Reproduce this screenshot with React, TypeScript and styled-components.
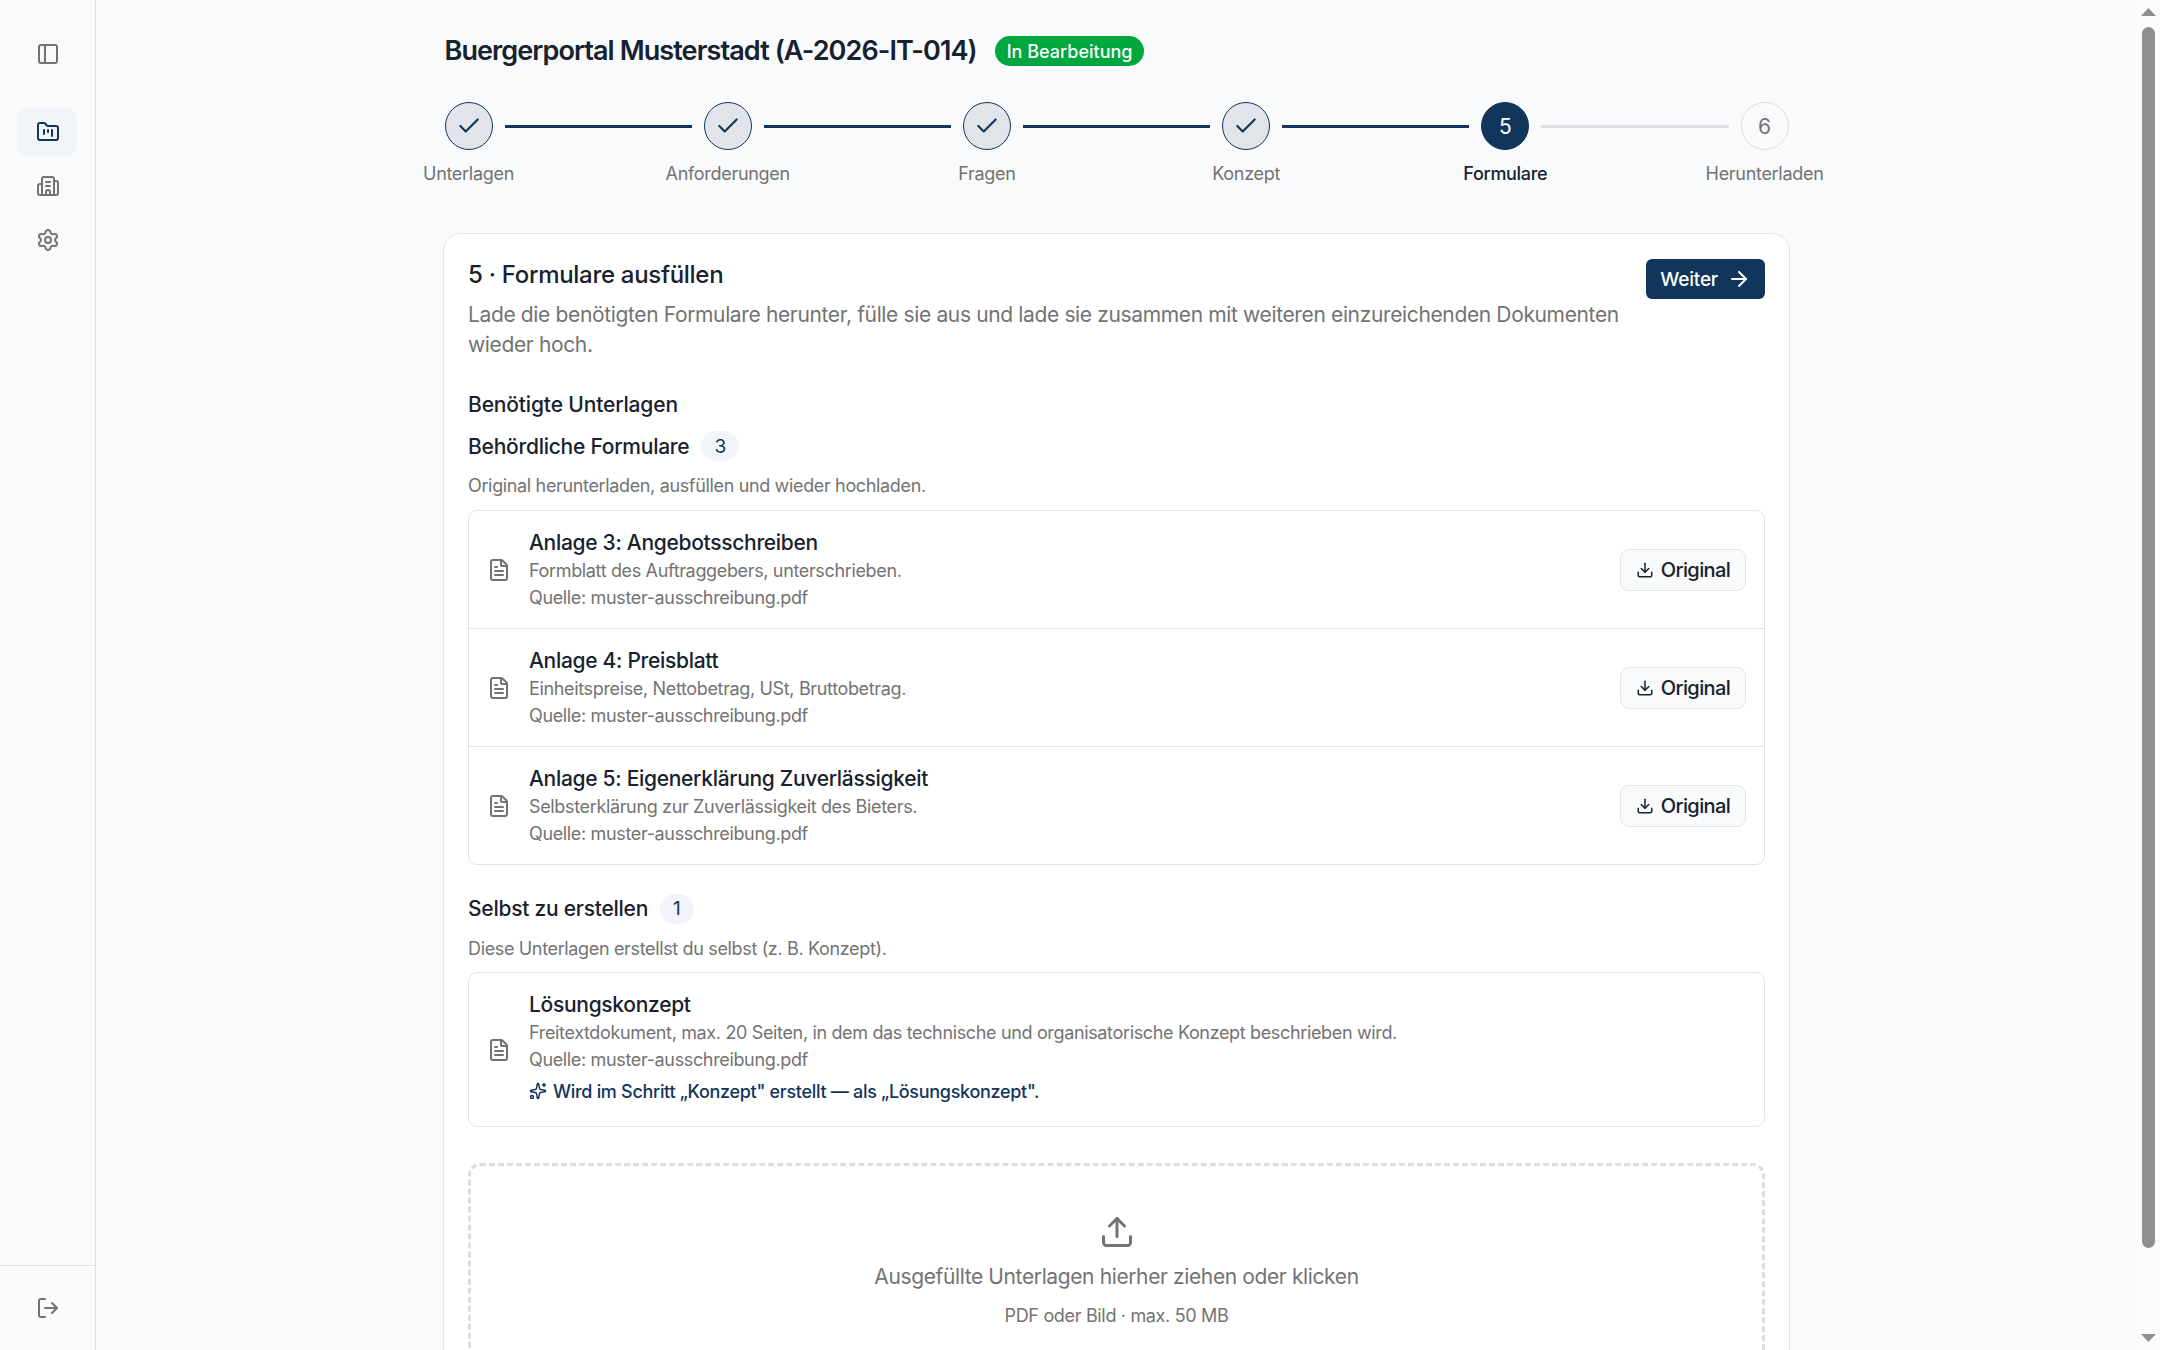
import { Fragment } from 'react';
import styled, { createGlobalStyle } from 'styled-components';
import {
  ArrowRight,
  Building2,
  Check,
  Download,
  FileText,
  FolderKanban,
  LogOut,
  PanelLeft,
  Settings,
  Sparkles,
  Upload,
} from 'lucide-react';

const navy = '#12355b';
const ink = '#18212e';
const muted = '#737373';
const line = '#e2e4e9';
const thumb = '#8f8f8f';

const GlobalStyle = createGlobalStyle`
  * {
    box-sizing: border-box;
  }

  html,
  body {
    margin: 0;
    height: 100%;
    overflow: hidden;
  }

  body {
    font-family: Inter, 'Liberation Sans', sans-serif;
    color: ${ink};
    background-color: #f9fafc;
  }
`;

const Shell = styled.div`
  display: flex;
  height: 100vh;
`;

const Sidebar = styled.aside`
  display: flex;
  flex-direction: column;
  flex: none;
  width: 96px;
  background-color: #fafafa;
  border-right: 1px solid #dedfe2;
`;

const SideTop = styled.div`
  display: flex;
  justify-content: center;
  padding-top: 42px;
  height: 108px;
`;

const SideNav = styled.nav`
  display: flex;
  flex-direction: column;
  gap: 6px;
  flex: 1;
  padding-left: 18px;
`;

const SideItem = styled.div<{ $active?: boolean }>`
  display: flex;
  align-items: center;
  justify-content: center;
  width: 59px;
  height: 48px;
  border-radius: 9px;
  color: ${(p) => (p.$active ? navy : muted)};
  background-color: ${(p) => (p.$active ? '#f1f5f9' : 'transparent')};
`;

const SideBottom = styled.div`
  display: flex;
  justify-content: center;
  align-items: center;
  height: 85px;
  border-top: 1px solid #dedfe2;
  color: ${muted};
`;

const IconMuted = styled.span`
  display: flex;
  color: ${muted};
`;

const Main = styled.main`
  flex: 1;
  min-width: 0;
  overflow: hidden;
  background-color: #f9fafc;
`;

const ScrollRail = styled.div`
  display: flex;
  flex-direction: column;
  align-items: center;
  flex: none;
  width: 23px;
  padding: 8px 0;
  background-color: #fbfbfb;
  color: ${thumb};
`;

const ScrollThumb = styled.div`
  flex: none;
  width: 13px;
  height: 1221px;
  margin-top: 11px;
  border-radius: 7px;
  background-color: ${thumb};
`;

const ScrollEnd = styled.svg`
  display: block;
  flex: none;
  margin-top: auto;

  &:first-child {
    margin-top: 0;
  }
`;

const Content = styled.div`
  width: 1344px;
  margin: 0 auto;
  padding: 30px 0 37px;
`;

const TitleRow = styled.div`
  display: flex;
  align-items: center;
  gap: 18px;
  height: 42px;
`;

const Title = styled.h1`
  margin: 0;
  font-size: 27px;
  line-height: 42px;
  font-weight: 600;
  letter-spacing: -0.9px;
`;

const StatusBadge = styled.span`
  display: flex;
  align-items: center;
  height: 30px;
  padding: 0 12px;
  border-radius: 15px;
  background-color: #00a63e;
  color: #fff;
  font-size: 18px;
  font-weight: 500;
`;

const Stepper = styled.div`
  display: flex;
  margin-top: 30px;
`;

const Step = styled.div`
  display: flex;
  flex-direction: column;
  align-items: center;
  flex: none;
  width: 48px;
  gap: 10px;
`;

const Circle = styled.div<{ $state: 'done' | 'active' | 'todo' }>`
  display: flex;
  align-items: center;
  justify-content: center;
  flex: none;
  width: 48px;
  height: 48px;
  border-radius: 50%;
  font-size: 21px;
  border: 1px solid ${(p) => (p.$state === 'todo' ? '#dcdde1' : navy)};
  color: ${(p) => (p.$state === 'active' ? '#fff' : p.$state === 'done' ? navy : muted)};
  background-color: ${(p) =>
    p.$state === 'active' ? navy : p.$state === 'done' ? '#e1e5ea' : 'transparent'};
`;

const StepLabel = styled.span<{ $active?: boolean }>`
  font-size: 18px;
  line-height: 27px;
  letter-spacing: -0.3px;
  white-space: nowrap;
  font-weight: ${(p) => (p.$active ? 500 : 400)};
  color: ${(p) => (p.$active ? ink : muted)};
`;

const StepLine = styled.div<{ $done?: boolean }>`
  flex: 1;
  height: 3px;
  margin: 22.5px 12px 0;
  background-color: ${(p) => (p.$done ? navy : '#dedfe4')};
`;

const Card = styled.section`
  margin: 46px -1.5px 0;
  padding: 24px;
  background-color: #fff;
  border: 1px solid ${line};
  border-radius: 18px;
`;

const CardHeader = styled.div`
  display: flex;
  align-items: flex-start;
  justify-content: space-between;
  gap: 16px;
`;

const HeaderText = styled.div`
  flex: 1;
`;

const CardTitle = styled.h2`
  margin: -1px 0 7px;
  font-size: 24px;
  line-height: 36px;
  font-weight: 500;
  letter-spacing: -0.3px;
`;

const CardIntro = styled.p`
  margin: 0;
  font-size: 21px;
  line-height: 30px;
  letter-spacing: -0.36px;
  color: ${muted};
`;

const NextButton = styled.button`
  display: flex;
  align-items: center;
  gap: 9px;
  flex: none;
  height: 40px;
  margin-top: 1px;
  padding: 0 14px;
  border: none;
  border-radius: 6px;
  background-color: ${navy};
  color: #fff;
  font: 500 19px Inter, sans-serif;
  letter-spacing: -0.2px;
`;

const SectionTitle = styled.h3`
  margin: 30px 0 11px;
  font-size: 21px;
  line-height: 30px;
  font-weight: 500;
  letter-spacing: -0.15px;
`;

const GroupHead = styled.div<{ $spaced?: boolean }>`
  display: flex;
  align-items: center;
  gap: 12px;
  height: 30px;
  margin-top: ${(p) => (p.$spaced ? '29px' : '0')};
  font-size: 21px;
  font-weight: 500;
  letter-spacing: -0.25px;
`;

const CountBadge = styled.span`
  display: flex;
  align-items: center;
  justify-content: center;
  min-width: 30px;
  height: 30px;
  padding: 0 13px;
  border-radius: 15px;
  background-color: #f1f5f9;
  color: ${navy};
  font-size: 19px;
  font-weight: 400;
  letter-spacing: 0;
`;

const GroupHint = styled.p`
  margin: 11px 0 10.5px;
  font-size: 18px;
  line-height: 27px;
  letter-spacing: -0.35px;
  color: ${muted};
`;

const DocList = styled.div`
  border: 1px solid ${line};
  border-radius: 9px;
`;

const DocRow = styled.div`
  display: flex;
  align-items: center;
  gap: 18px;
  padding: 18px 18px 17px;

  & + & {
    border-top: 1px solid ${line};
  }
`;

const DocText = styled.div`
  flex: 1;
`;

const DocName = styled.div`
  margin-bottom: 1px;
  font-size: 21px;
  line-height: 27px;
  font-weight: 500;
  letter-spacing: -0.3px;
`;

const DocLine = styled.div`
  font-size: 18px;
  line-height: 27px;
  letter-spacing: -0.35px;
  color: ${muted};
`;

const DocNote = styled.div`
  display: flex;
  align-items: center;
  gap: 6px;
  margin: 4.5px 0 4px;
  font-size: 18px;
  line-height: 27px;
  font-weight: 500;
  letter-spacing: -0.3px;
  color: ${navy};
`;

const OriginalButton = styled.button`
  display: flex;
  align-items: center;
  justify-content: center;
  gap: 7px;
  flex: none;
  width: 126px;
  height: 42px;
  border: 1px solid ${line};
  border-radius: 9px;
  background-color: #f9fafb;
  color: ${ink};
  font: 500 20px Inter, sans-serif;
  letter-spacing: -0.6px;
`;

const DropZone = styled.div`
  display: flex;
  flex-direction: column;
  align-items: center;
  margin-top: 36px;
  padding: 48px;
  border: 3px dashed #dcdde1;
  border-radius: 12px;
  color: ${muted};
`;

const DropTitle = styled.div`
  margin-top: 12px;
  font-size: 21px;
  line-height: 30px;
  letter-spacing: -0.38px;
`;

const DropHint = styled.div`
  margin-top: 10px;
  font-size: 18px;
  line-height: 27px;
  letter-spacing: -0.33px;
`;

type Doc = { name: string; desc: string };

const forms: Doc[] = [
  { name: 'Anlage 3: Angebotsschreiben', desc: 'Formblatt des Auftraggebers, unterschrieben.' },
  { name: 'Anlage 4: Preisblatt', desc: 'Einheitspreise, Nettobetrag, USt, Bruttobetrag.' },
  {
    name: 'Anlage 5: Eigenerklärung Zuverlässigkeit',
    desc: 'Selbsterklärung zur Zuverlässigkeit des Bieters.',
  },
];

const steps = ['Unterlagen', 'Anforderungen', 'Fragen', 'Konzept', 'Formulare', 'Herunterladen'];
const activeStep = 4;

export default function App() {
  return (
    <Shell>
      <GlobalStyle />
      <Sidebar>
        <SideTop>
          <IconMuted>
            <PanelLeft size={24} />
          </IconMuted>
        </SideTop>
        <SideNav>
          <SideItem $active>
            <FolderKanban size={24} />
          </SideItem>
          <SideItem>
            <Building2 size={24} />
          </SideItem>
          <SideItem>
            <Settings size={24} />
          </SideItem>
        </SideNav>
        <SideBottom>
          <LogOut size={24} />
        </SideBottom>
      </Sidebar>
      <Main>
        <Content>
          <TitleRow>
            <Title>Buergerportal Musterstadt (A-2026-IT-014)</Title>
            <StatusBadge>In Bearbeitung</StatusBadge>
          </TitleRow>
          <Stepper>
            {steps.map((label, i) => {
              const state = i < activeStep ? 'done' : i === activeStep ? 'active' : 'todo';
              return (
                <Fragment key={label}>
                  <Step>
                    <Circle $state={state}>
                      {state === 'done' ? <Check size={26} /> : i + 1}
                    </Circle>
                    <StepLabel $active={i === activeStep}>{label}</StepLabel>
                  </Step>
                  {i < steps.length - 1 && <StepLine $done={i < activeStep} />}
                </Fragment>
              );
            })}
          </Stepper>
          <Card>
            <CardHeader>
              <HeaderText>
                <CardTitle>5 · Formulare ausfüllen</CardTitle>
                <CardIntro>
                  Lade die benötigten Formulare herunter, fülle sie aus und lade sie zusammen mit
                  weiteren einzureichenden Dokumenten wieder hoch.
                </CardIntro>
              </HeaderText>
              <NextButton>
                Weiter <ArrowRight size={24} />
              </NextButton>
            </CardHeader>
            <SectionTitle>Benötigte Unterlagen</SectionTitle>
            <GroupHead>
              Behördliche Formulare <CountBadge>3</CountBadge>
            </GroupHead>
            <GroupHint>Original herunterladen, ausfüllen und wieder hochladen.</GroupHint>
            <DocList>
              {forms.map((doc) => (
                <DocRow key={doc.name}>
                  <IconMuted>
                    <FileText size={24} />
                  </IconMuted>
                  <DocText>
                    <DocName>{doc.name}</DocName>
                    <DocLine>{doc.desc}</DocLine>
                    <DocLine>Quelle: muster-ausschreibung.pdf</DocLine>
                  </DocText>
                  <OriginalButton>
                    <Download size={18} /> Original
                  </OriginalButton>
                </DocRow>
              ))}
            </DocList>
            <GroupHead $spaced>
              Selbst zu erstellen <CountBadge>1</CountBadge>
            </GroupHead>
            <GroupHint>Diese Unterlagen erstellst du selbst (z. B. Konzept).</GroupHint>
            <DocList>
              <DocRow>
                <IconMuted>
                  <FileText size={24} />
                </IconMuted>
                <DocText>
                  <DocName>Lösungskonzept</DocName>
                  <DocLine>
                    Freitextdokument, max. 20 Seiten, in dem das technische und organisatorische
                    Konzept beschrieben wird.
                  </DocLine>
                  <DocLine>Quelle: muster-ausschreibung.pdf</DocLine>
                  <DocNote>
                    <Sparkles size={18} />
                    Wird im Schritt „Konzept" erstellt — als „Lösungskonzept".
                  </DocNote>
                </DocText>
              </DocRow>
            </DocList>
            <DropZone>
              <Upload size={36} strokeWidth={2} />
              <DropTitle>Ausgefüllte Unterlagen hierher ziehen oder klicken</DropTitle>
              <DropHint>PDF oder Bild · max. 50 MB</DropHint>
            </DropZone>
          </Card>
        </Content>
      </Main>
      <ScrollRail>
        <ScrollEnd width="15" height="8" viewBox="0 0 15 8">
          <path d="M7.5 0 15 8H0z" fill="currentColor" />
        </ScrollEnd>
        <ScrollThumb />
        <ScrollEnd width="15" height="8" viewBox="0 0 15 8">
          <path d="M0 0h15L7.5 8z" fill="currentColor" />
        </ScrollEnd>
      </ScrollRail>
    </Shell>
  );
}
